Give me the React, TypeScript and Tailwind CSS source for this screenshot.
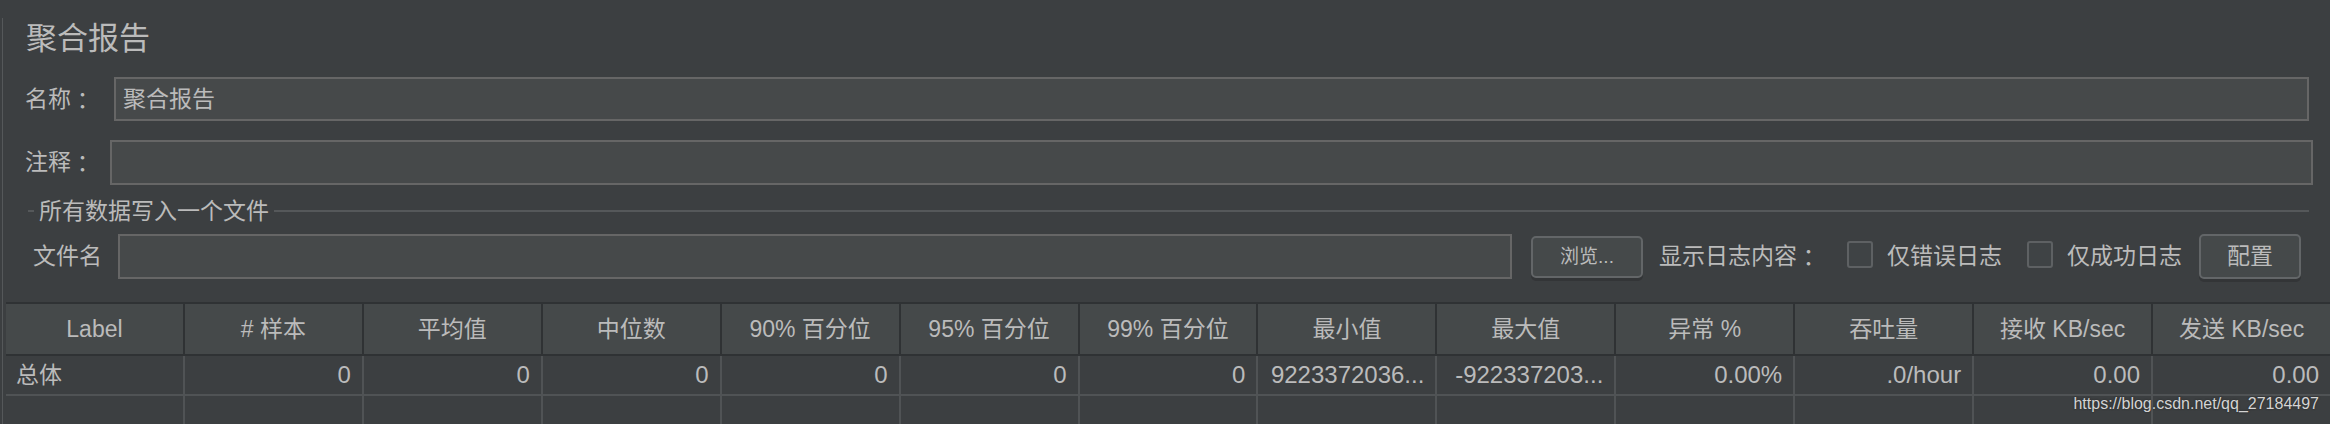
import React from 'react';

const cjk = { fontFamily: "'Liberation Sans', 'Noto Sans CJK SC', sans-serif" };

const columns = [
  'Label',
  '# 样本',
  '平均值',
  '中位数',
  '90% 百分位',
  '95% 百分位',
  '99% 百分位',
  '最小值',
  '最大值',
  '异常 %',
  '吞吐量',
  '接收 KB/sec',
  '发送 KB/sec',
];

const totals = ['总体', '0', '0', '0', '0', '0', '0', '9223372036...', '-922337203...', '0.00%', '.0/hour', '0.00', '0.00'];

// full-width colon, centred like the mac font does
const Colon = () => <span className="inline-block w-[23px] text-center font-['Noto_Sans_CJK_JP']">：</span>;

const Checkbox = () => (
  <span className="inline-block h-[27px] w-[26px] rounded-[3px] border-2 border-[#5e6163] bg-[#3f4345]" />
);

const App = () => {
  return (
    <div style={cjk} className="relative h-[424px] w-[2330px] overflow-hidden bg-[#3c3f41] text-[#bbbbbb]">
      <div className="ml-[2px] h-full border-l-[1px] border-[#55585a]">
        {/* title */}
        <div className="mt-[18px] flex h-[41px] items-center pl-[23px] text-[31px] leading-none">聚合报告</div>

        {/* name */}
        <div className="mt-[18px] flex items-center text-[23px] leading-none">
          <div className="flex w-[111px] items-center pl-[22px]">
            名称<Colon />
          </div>
          <div className="flex h-[44px] w-[2195px] items-center border-2 border-[#666666] bg-[#46494a] pl-[7px]">聚合报告</div>
        </div>

        {/* comment */}
        <div className="mt-[19px] flex items-center text-[23px] leading-none">
          <div className="flex w-[107px] items-center pl-[22px]">
            注释<Colon />
          </div>
          <div className="h-[45px] w-[2203px] border-2 border-[#666666] bg-[#46494a]" />
        </div>

        {/* file section */}
        <div className="mt-[14px] flex h-[24px] items-center pl-[25px] pr-[21px] text-[23px] leading-none">
          <div className="h-[2px] w-[6px] bg-[#55585a]" />
          <span className="px-[5px]">所有数据写入一个文件</span>
          <div className="h-[2px] flex-1 bg-[#55585a]" />
        </div>

        <div className="mt-[11px] flex items-center text-[23px] leading-none">
          <div className="w-[115px] pl-[30px]">文件名</div>
          <div className="h-[45px] w-[1394px] border-2 border-[#666666] bg-[#46494a]" />
          <button className="ml-[19px] flex h-[42px] w-[112px] items-center justify-center rounded-[5px] border-2 border-[#636668] bg-[#45494a] text-[19px] text-[#bbbbbb] shadow-[0_3px_0_#333537]">
            浏览...
          </button>
          <div className="ml-[16px] flex items-center">
            显示日志内容<Colon />
          </div>
          <div className="ml-[27px]">
            <Checkbox />
          </div>
          <span className="ml-[14px]">仅错误日志</span>
          <div className="ml-[25px]">
            <Checkbox />
          </div>
          <span className="ml-[14px]">仅成功日志</span>
          <button className="ml-[17px] flex h-[45px] w-[102px] items-center justify-center rounded-[5px] border-2 border-[#636668] bg-[#45494a] text-[23px] text-[#bbbbbb] shadow-[0_3px_0_#333537]">
            配置
          </button>
        </div>

        {/* table */}
        <div className="ml-[3px] mt-[23px]">
          <div className="grid grid-cols-[repeat(13,minmax(0,1fr))] gap-x-[2px] border-y-2 border-[#2f3234] bg-[#2f3234]">
            {columns.map((c) => (
              <div key={c} className="flex h-[50px] items-center justify-center bg-[#45494a] text-[23px] leading-none">
                {c}
              </div>
            ))}
          </div>
          <div className="grid grid-cols-[repeat(13,minmax(0,1fr))] gap-x-[2px] border-b-2 border-[#505355] bg-[#505355]">
            {totals.map((v, i) => (
              <div
                key={i}
                className={
                  i === 0
                    ? 'flex h-[38px] items-center bg-[#3c3f41] pl-[10px] text-[23px] leading-none'
                    : 'flex h-[38px] items-center justify-end bg-[#3c3f41] pr-[11px] text-[24px] leading-none'
                }
              >
                {v}
              </div>
            ))}
          </div>
          <div className="grid grid-cols-[repeat(13,minmax(0,1fr))] gap-x-[2px] bg-[#505355]">
            {totals.map((_, i) => (
              <div key={i} className="h-[38px] bg-[#3c3f41]" />
            ))}
          </div>
        </div>
      </div>

      <div className="absolute bottom-[12px] right-[11px] font-['Liberation_Sans'] text-[16px] leading-none text-[#d4d4d4] [text-shadow:0_0_2px_#222]">
        https://blog.csdn.net/qq_27184497
      </div>
    </div>
  );
};

export default App;
